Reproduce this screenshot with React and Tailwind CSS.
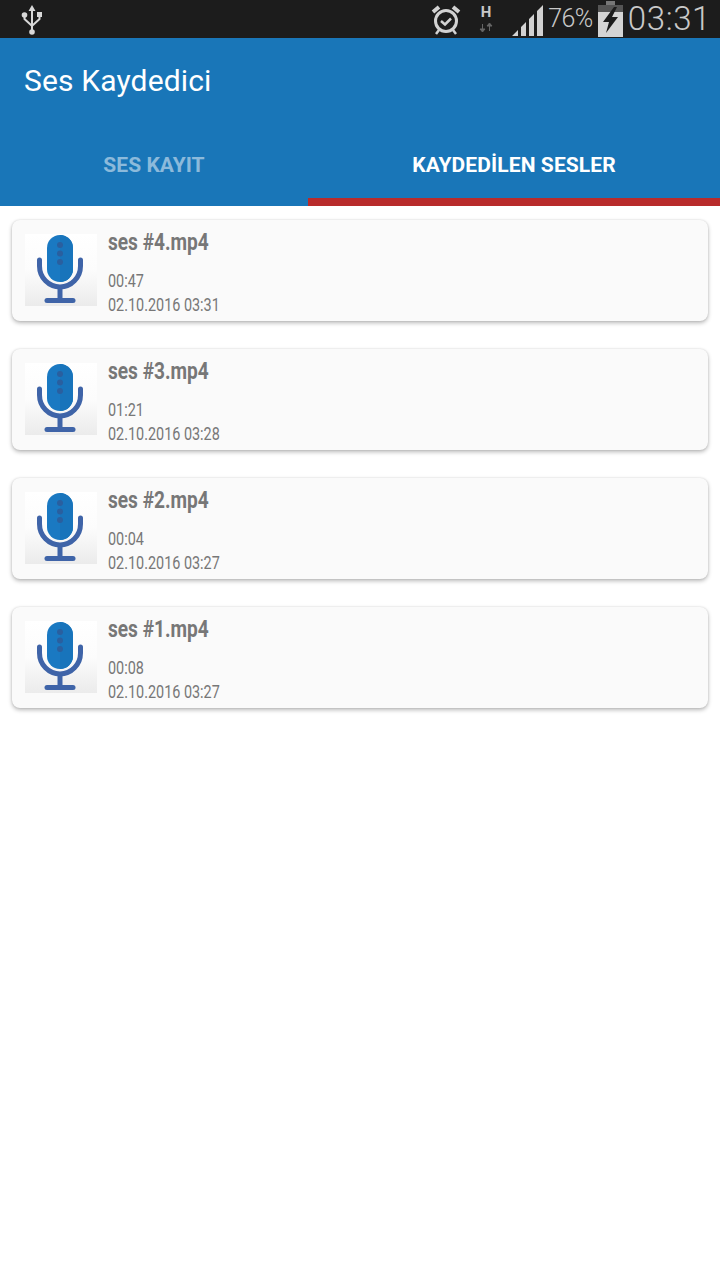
const items = [
  { name: "ses #4.mp4", dur: "00:47", date: "02.10.2016 03:31" },
  { name: "ses #3.mp4", dur: "01:21", date: "02.10.2016 03:28" },
  { name: "ses #2.mp4", dur: "00:04", date: "02.10.2016 03:27" },
  { name: "ses #1.mp4", dur: "00:08", date: "02.10.2016 03:27" },
];

function Mic() {
  return (
    <div className="w-[72px] h-[72px] shrink-0 bg-gradient-to-b from-[#ffffff] via-[#fcfcfc] to-[#ebebeb]">
      <svg width="72" height="72" viewBox="0 0 72 72">
        <path d="M14.500 26v6a20.500 21 0 0 0 41 0V26" fill="none" stroke="#3f64a8" strokeWidth="5" strokeLinecap="round" />
        <path d="M35 52v14" stroke="#3f64a8" strokeWidth="5" />
        <path d="M22 66.500h26" stroke="#3f64a8" strokeWidth="5" strokeLinecap="round" />
        <path d="M22 14a13 13 0 0 1 26 0v21a13 13 0 0 1-26 0z" fill="#1a79c2" />
        <path d="M35 1a13 13 0 0 1 13 13v21a13 13 0 0 1-13 13z" fill="#1874bb" />
        <circle cx="35" cy="11" r="3" fill="#2a5f9f" />
        <circle cx="35" cy="19.500" r="3" fill="#2a5f9f" />
        <circle cx="35" cy="28" r="3" fill="#2a5f9f" />
      </svg>
    </div>
  );
}

function StatusBar() {
  return (
    <div className="h-[38px] bg-[#1c1c1c] flex items-center text-[#c9c9c9]">
      <svg className="ml-[21px]" width="22" height="34" viewBox="0 0 22 34">
        <path d="M11 3l3.500 6H12v19h-2V9H7.500z" fill="#d8d8d8" />
        <path d="M3.500 13.500v3.500l7.500 7 7.500-7v-3.500" fill="none" stroke="#d8d8d8" strokeWidth="2" />
        <circle cx="3.500" cy="13" r="2.800" fill="#d8d8d8" />
        <rect x="16" y="10" width="5" height="5" fill="#d8d8d8" />
        <circle cx="11" cy="30" r="2.800" fill="#d8d8d8" />
      </svg>
      <div className="ml-auto flex items-center">
        <svg width="30" height="34" viewBox="0 0 30 34">
          <circle cx="15" cy="19" r="10.500" fill="none" stroke="#d2d2d2" strokeWidth="3" />
          <path d="M10 19l4 3.500 6-6" fill="none" stroke="#d2d2d2" strokeWidth="2.500" />
          <path d="M2 10l6-5M28 10l-6-5" stroke="#d2d2d2" strokeWidth="4" />
          <path d="M8 28l-3 4M22 28l3 4" stroke="#d2d2d2" strokeWidth="2.500" />
        </svg>
        <div className="ml-[15px] w-[20px] h-[34px] flex flex-col items-center">
          <span className="text-[15px] leading-[15px] mt-[3px] font-bold text-[#c8c8c8]">H</span>
          <svg width="16" height="12" viewBox="0 0 16 12" className="mt-[2px]">
            <path d="M4.500 11V5M2 6h5l-2.500-3z" transform="rotate(180 4.500 6.500)" stroke="#666" fill="#666" />
            <path d="M11.500 9V3M9 4h5l-2.500-3z" stroke="#666" fill="#666" />
          </svg>
        </div>
        <svg className="ml-[15px]" width="33" height="34" viewBox="0 0 33 34">
          <path d="M1 34l6-6v6zM10 25l5-5v14h-5zM18 17l5-5v22h-5zM26 9l6-6v31h-6z" fill="#d2d2d2" />
        </svg>
        <span className="ml-[4px] text-[25px] leading-[34px] font-light tracking-[-0.5px]">76%</span>
        <svg className="ml-[5px]" width="25" height="36" viewBox="0 0 25 36">
          <rect x="8" y="0" width="9" height="4" fill="#777" />
          <rect x="0" y="4" width="25" height="8" fill="#555" />
          <rect x="0" y="11" width="25" height="25" fill="#d4d4d4" />
          <path d="M16 6L5 21h6l-3 11 12-16h-6l5-10z" fill="#1c1c1c" />
        </svg>
        <span className="ml-[5px] mr-[9px] text-[33px] leading-[34px] font-light tracking-[0.6px]">03:31</span>
      </div>
    </div>
  );
}

export default function App() {
  return (
    <div className="w-[720px] h-[1280px] bg-white [font-family:Roboto,sans-serif] overflow-hidden">
      <StatusBar />
      <header className="h-[168px] bg-[#1976b8] flex flex-col">
        <h1 className="pl-[24px] pt-[24px] text-[30px] leading-[38px] tracking-[0.15px] text-white font-normal">Ses Kaydedici</h1>
        <div className="mt-auto flex h-[80px]">
          <div className="w-[308px] pt-[8px] pb-[8px] flex items-center justify-center text-[21px] font-bold tracking-[0.05px] text-white/50">SES KAYIT</div>
          <div className="flex-1 pt-[8px] border-b-[8px] border-[#b82b2b] flex items-center justify-center text-[21px] font-bold tracking-[0.1px] text-white">KAYDEDİLEN SESLER</div>
        </div>
      </header>
      <main className="pt-[14px] px-[12px] flex flex-col gap-[28px]">
        {items.map((it) => (
          <div key={it.name} className="h-[101px] bg-[#fafafa] rounded-[8px] shadow-[0_2px_4px_rgba(0,0,0,0.28),0_0_2px_rgba(0,0,0,0.12)] pl-[13px] pt-[14px] flex">
            <Mic />
            <div className="ml-[11px] -mt-[7px] text-[#777777]">
              <div className="text-[23px] leading-[32px] font-bold origin-left scale-x-[0.83]">{it.name}</div>
              <div className="mt-[10px] text-[18px] leading-[24px] origin-left scale-x-[0.8]">{it.dur}</div>
              <div className="text-[18px] leading-[24px] whitespace-nowrap origin-left scale-x-[0.8]">{it.date}</div>
            </div>
          </div>
        ))}
      </main>
    </div>
  );
}
